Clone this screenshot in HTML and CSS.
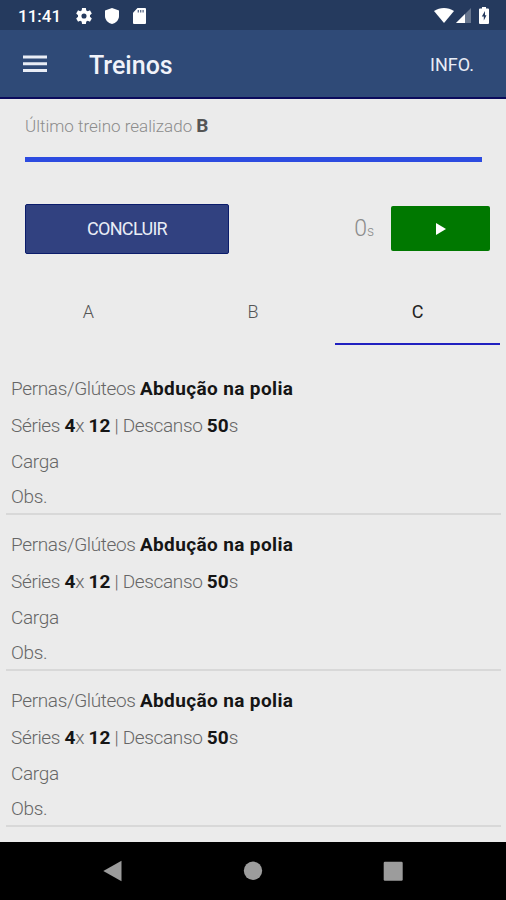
FILE: index.html
```html
<!DOCTYPE html>
<html lang="pt-BR">
<head>
<meta charset="utf-8">
<title>Treinos</title>
<link rel="stylesheet" href="styles.css">
</head>
<body>
<div class="status">
  <span class="clock">11:41</span>
  <svg class="gear" width="16" height="16" viewBox="2 2 20 20" fill="#fff"><path fill-rule="evenodd" d="M19.4 13c0-.3.1-.6.1-1s0-.7-.1-1l2.1-1.7c.2-.1.2-.4.1-.6l-2-3.5c-.1-.2-.4-.3-.6-.2l-2.500 1c-.5-.4-1.100-.7-1.700-1l-.4-2.600c0-.2-.2-.4-.4-.4h-4c-.3 0-.5.200-.5.400L9.100 5c-.6.300-1.200.600-1.700 1L5 5c-.3-.1-.5 0-.6.200l-2 3.500c-.1.200-.1.500.1.600L4.600 11c0 .3-.1.600-.1 1s0 .7.100 1l-2.100 1.700c-.2.100-.2.400-.1.600l2 3.500c.1.200.4.300.6.200l2.400-1c.5.400 1.100.7 1.700 1l.4 2.600c0 .200.2.400.5.400h4c.2 0 .4-.2.400-.4l.4-2.600c.6-.3 1.200-.6 1.700-1l2.500 1c.2.100.5 0 .6-.2l2-3.500c.1-.2.1-.5-.1-.6zM12 15.200a3.200 3.200 0 1 1 0-6.400 3.200 3.200 0 0 1 0 6.400z"/></svg>
  <svg class="shield" width="14" height="16" viewBox="0 0 14 16" fill="#fff"><path d="M7 0 14 2.500V8c0 4-3 7-7 8-4-1-7-4-7-8V2.500z"/></svg>
  <svg class="card" width="13" height="16" viewBox="0 0 13 16"><path fill="#fff" d="M4.500 0H12a1 1 0 0 1 1 1v14a1 1 0 0 1-1 1H1a1 1 0 0 1-1-1V4.800z"/><path stroke="#5b6b88" stroke-width="1.300" d="M5.300 2v2.500M7.700 2v2.500M10.100 2v2.500"/></svg>
  <svg class="wifi" width="20" height="15" viewBox="0 0 20 15" fill="#fff"><path d="M10 15 0 3C6-1 14-1 20 3z"/></svg>
  <svg class="signal" width="15" height="15" viewBox="0 0 15 15" fill="#fff"><path opacity=".3" d="M15 0v15H0z"/><path d="M9 6v9H0z"/></svg>
  <svg class="battery" width="10" height="17" viewBox="0 0 10 17"><path fill="#fff" d="M3 0h4v1.500h2a1 1 0 0 1 1 1V16a1 1 0 0 1-1 1H1a1 1 0 0 1-1-1V2.500a1 1 0 0 1 1-1h2z"/><path fill="#253a5e" d="M6 4 2.800 9.500h2V13.500L7.500 8.200H6z"/></svg>
</div>
<header class="appbar">
  <svg class="menu" width="24" height="18" viewBox="0 0 24 18"><path stroke="#e9edf6" stroke-width="3" d="M0 2h24M0 8.700h24M0 15.400h24"/></svg>
  <h1 class="title">Treinos</h1>
  <span class="info">INFO.</span>
</header>
<main class="content">
  <p class="last">Último treino realizado <b>B</b></p>
  <div class="bar"></div>
  <div class="actions">
    <button class="finish">CONCLUIR</button>
    <span class="timer">0<small>s</small></span>
    <button class="play"><svg width="10" height="12" viewBox="0 0 10 12"><path fill="#fff" d="M0 0l10 6-10 6z"/></svg></button>
  </div>
  <nav class="tabs"><span class="tab">A</span><span class="tab">B</span><span class="tab active">C</span></nav>
  <section class="item">
    <p class="name">Pernas/Glúteos <b>Abdução na polia</b></p>
    <p class="sets">Séries <b>4</b>x <b>12</b> | Descanso <b>50</b>s</p>
    <p>Carga</p>
    <p>Obs.</p>
  </section>
  <section class="item">
    <p class="name">Pernas/Glúteos <b>Abdução na polia</b></p>
    <p class="sets">Séries <b>4</b>x <b>12</b> | Descanso <b>50</b>s</p>
    <p>Carga</p>
    <p>Obs.</p>
  </section>
  <section class="item">
    <p class="name">Pernas/Glúteos <b>Abdução na polia</b></p>
    <p class="sets">Séries <b>4</b>x <b>12</b> | Descanso <b>50</b>s</p>
    <p>Carga</p>
    <p>Obs.</p>
  </section>
</main>
<footer class="navbar">
  <svg width="20" height="22" viewBox="0 0 20 22"><path fill="#9c9c9c" d="M18.500.8v20.400L.3 11z"/></svg>
  <svg width="20" height="20" viewBox="0 0 20 20"><circle cx="10" cy="9.800" r="9.200" fill="#9c9c9c"/></svg>
  <svg width="20" height="20" viewBox="0 0 20 20"><rect x=".7" y=".7" width="19" height="19" rx="1.200" fill="#9c9c9c"/></svg>
</footer>
</body>
</html>
```
FILE: styles.css
```css
* { box-sizing: border-box; margin: 0; padding: 0; }
body {
  width: 506px; height: 900px; overflow: hidden;
  display: flex; flex-direction: column;
  background: #ebebeb; color: #666;
  font-family: Roboto, "Liberation Sans", sans-serif; font-weight: 300;
}
svg { display: block; flex: none; }
.status {
  height: 30px; flex: none; display: flex; align-items: center;
  padding: 1px 17px 0 18px; background: #253a5e;
}
.clock { width: 58px; color: #fff; font-size: 17px; font-weight: 500; }
.shield { margin-left: 13px; }
.card { margin-left: 14px; }
.wifi { margin-left: auto; }
.signal { margin-left: 2px; }
.battery { margin-left: 8px; }
.appbar {
  height: 69px; flex: none; display: flex; align-items: center;
  padding: 0 32px 0 23px; background: #2f4a77;
  border-bottom: 2px solid #0b0b5c;
}
.menu { margin-top: 1px; }
.title { margin: 4px 0 0 42px; color: #f1f3fa; font-size: 25px; font-weight: 500; }
.info { margin: 2px 0 0 auto; color: #e9edf6; font-size: 18px; font-weight: 400; }
.content { flex: 1; min-height: 0; overflow: hidden; }
.last { height: 58px; padding: 16px 25px 0; font-size: 17px; line-height: 22px; color: #8c8c8c; }
.last b { color: #555; font-size: 19px; font-weight: 700; }
.bar { height: 5px; margin: 0 24px 0 25px; background: #2c4be0; }
.actions { height: 118px; display: flex; align-items: center; padding: 15px 16px 0 25px; }
button { border: 0; color: #e9edf6; font-family: inherit; border-radius: 2px; }
.finish {
  width: 204px; height: 50px; background: #314180;
  border: 1px solid #0b1c6b; font-size: 18px; font-weight: 400; letter-spacing: -.7px;
}
.timer { margin-left: auto; font-size: 23px; color: #8c8c8c; }
.timer small { font-size: 14px; }
.play {
  width: 99px; height: 45px; margin-left: 17px; background: #007800;
  display: flex; align-items: center; justify-content: center;
}
.tabs { display: grid; grid-template-columns: repeat(3, 1fr); margin: 0 6px; height: 65px; }
.tab { text-align: center; font-size: 18px; line-height: 63px; color: #555; }
.active { color: #222; font-weight: 400; border-bottom: 2px solid #2020c0; }
.item { height: 156px; margin: 0 5px 0 6px; padding: 12px 5px 0; border-bottom: 2px solid #d8d8d8; }
.tabs + .item { height: 170px; padding-top: 26px; }
.item p { height: 35px; line-height: 36px; font-size: 19px; letter-spacing: -.35px; white-space: pre; }
.item .name { height: 37px; }
.item .sets { height: 36px; }
.item b { color: #151515; font-weight: 700; letter-spacing: 0; }
.item .name b { letter-spacing: .37px; }
.navbar {
  height: 58px; flex: none; display: flex; align-items: center; justify-content: space-between;
  padding: 0 103px; background: #000;
}
```
